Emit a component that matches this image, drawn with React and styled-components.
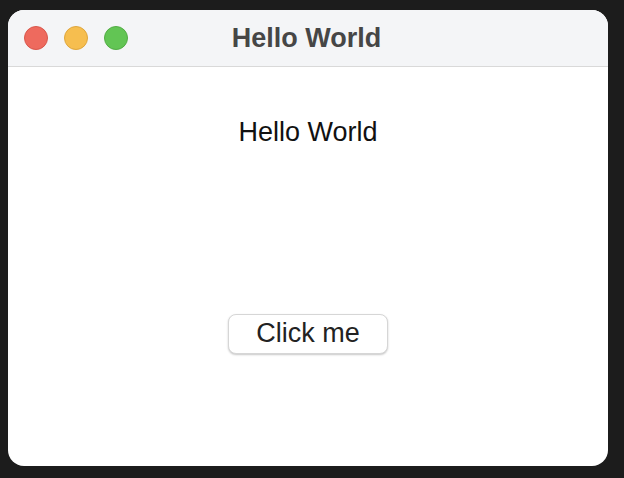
import React from 'react';
import styled, { createGlobalStyle } from 'styled-components';

const Global = createGlobalStyle`
    html, body {
        margin: 0;
        padding: 0;
        background: #1c1c1c;
        width: 624px;
        height: 478px;
        overflow: hidden;
        font-family: "Liberation Sans", Arial, sans-serif;
    }
`

const Desk = styled.div`
    padding: 10px 16px 12px 8px;
`
const Window = styled.div`
    width: 600px;
    height: 456px;
    background: #ffffff;
    border-radius: 16px;
    overflow: hidden;
    display: flex;
    flex-direction: column;
`
const TitleBar = styled.div`
    height: 56px;
    background: #f4f5f7;
    border-bottom: 1px solid #d9d9d9;
    display: flex;
    align-items: center;
    position: relative;
    padding-left: 16px;
    gap: 16px;
`
const Light = styled.span`
    width: 22px;
    height: 22px;
    border-radius: 50%;
    background: ${p => p.color};
    border: 1px solid ${p => p.edge};
`
const Title = styled.div`
    position: absolute;
    left: 0;
    right: 0;
    top: 0;
    bottom: 0;
    display: flex;
    align-items: center;
    justify-content: center;
    padding-right: 3px;
    font-weight: bold;
    font-size: 27px;
    color: #464646;
    pointer-events: none;
`
const Content = styled.div`
    flex: 1;
    display: flex;
    flex-direction: column;
    align-items: center;
    padding-top: 50px;
`
const Label = styled.div`
    font-size: 27px;
    line-height: 30px;
    color: #111;
`
const Button = styled.button`
    margin-top: 167px;
    width: 160px;
    height: 40px;
    background: #fff;
    border: 1px solid #d6d6d6;
    border-radius: 8px;
    box-shadow: 0 1px 2px rgba(0, 0, 0, 0.22);
    font-family: "Liberation Sans", Arial, sans-serif;
    font-size: 27px;
    line-height: 36px;
    color: #222;
    padding: 0 0 2px 0;
`

const App = () => {
    return (
        <Desk>
            <Global />
            <Window>
                <TitleBar>
                    <Light color="#ee6a5e" edge="#d8574c" />
                    <Light color="#f6be4f" edge="#dea63d" />
                    <Light color="#62c554" edge="#52ac45" />
                    <Title>Hello World</Title>
                </TitleBar>
                <Content>
                    <Label>Hello World</Label>
                    <Button>Click me</Button>
                </Content>
            </Window>
        </Desk>
    )
}
export default App
